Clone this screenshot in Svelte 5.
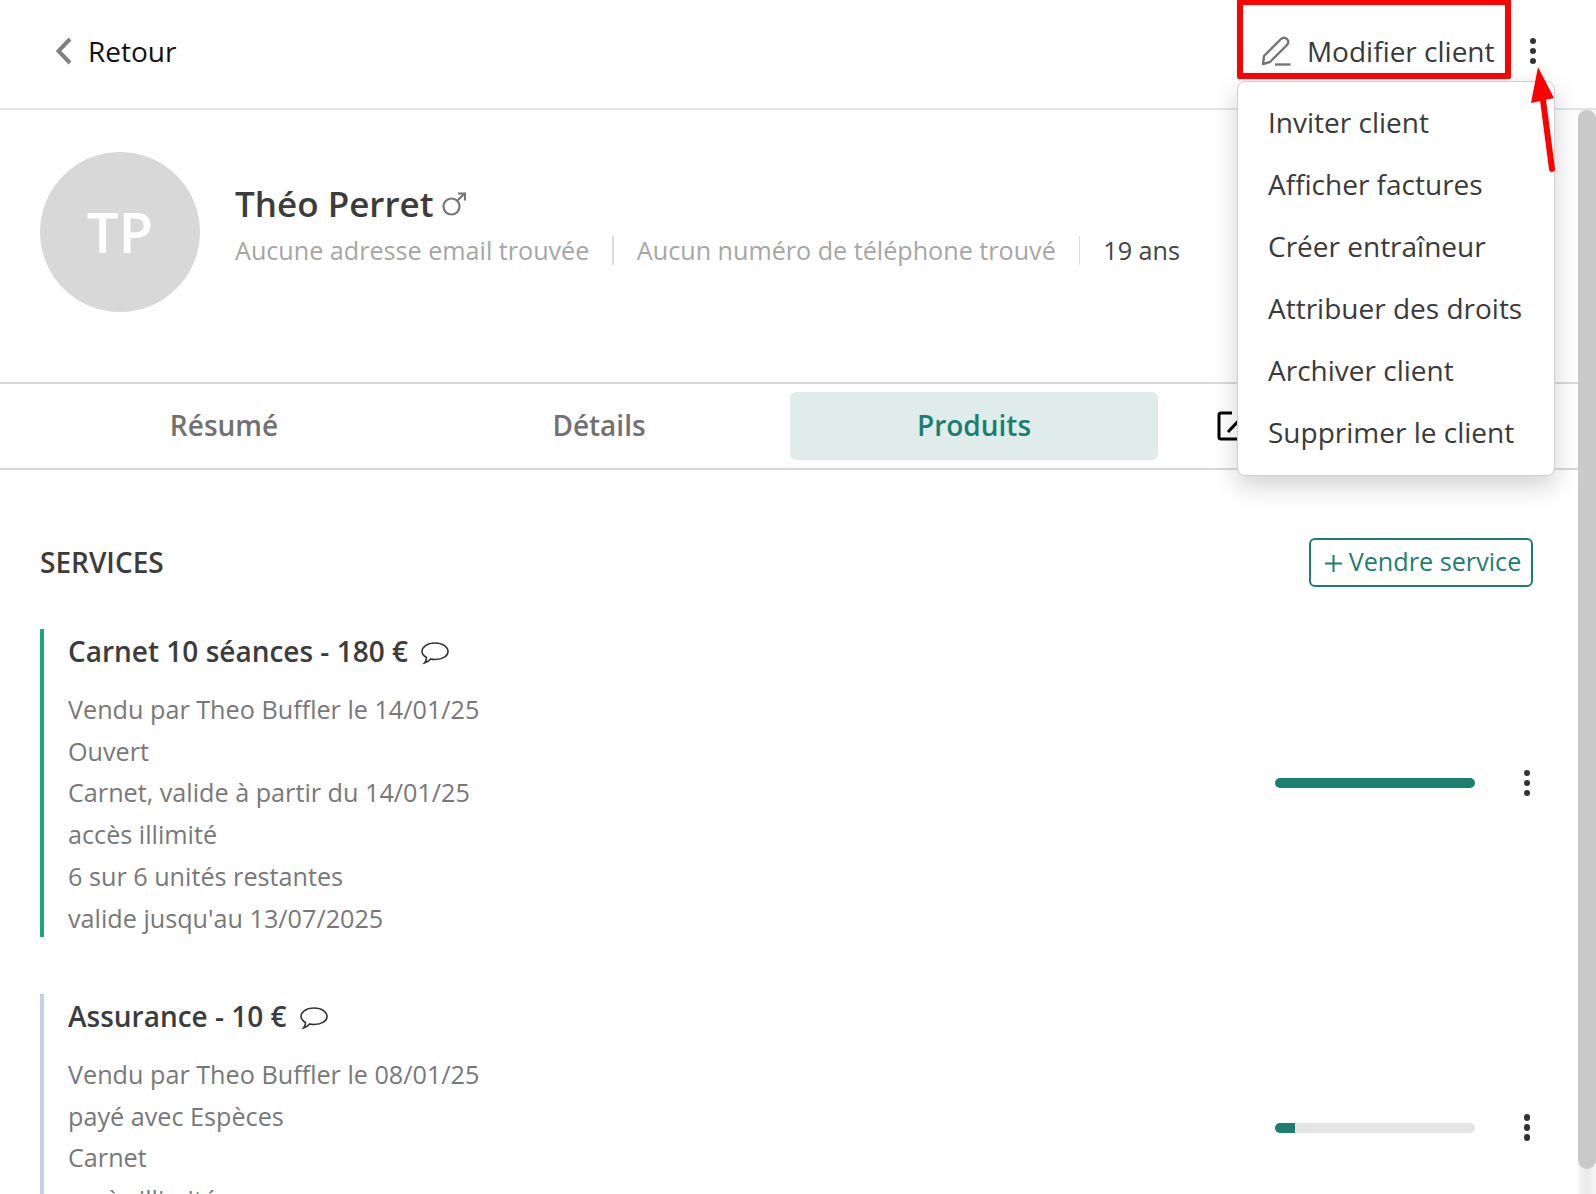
<script>
  const menuItems = [
    'Inviter client',
    'Afficher factures',
    'Créer entraîneur',
    'Attribuer des droits',
    'Archiver client',
    'Supprimer le client'
  ];

  const tabs = ['Résumé', 'Détails', 'Produits'];

  const services = [
    {
      title: 'Carnet 10 séances - 180 €',
      accent: 'green',
      progress: 100,
      lines: [
        'Vendu par Theo Buffler le 14/01/25',
        'Ouvert',
        'Carnet, valide à partir du 14/01/25',
        'accès illimité',
        '6 sur 6 unités restantes',
        'valide jusqu\'au 13/07/2025'
      ]
    },
    {
      title: 'Assurance - 10 €',
      accent: 'blue',
      progress: 10,
      lines: [
        'Vendu par Theo Buffler le 08/01/25',
        'payé avec Espèces',
        'Carnet',
        'accès illimité'
      ]
    }
  ];
</script>

<div class="page">
  <header class="topbar">
    <a class="back" href="#retour">
      <svg viewBox="0 0 18 28" width="18" height="28">
        <path d="M16 2 L4.5 14 L16 26" fill="none" stroke="#808080" stroke-width="4" />
      </svg>
      Retour
    </a>
    <div class="topbar__actions">
      <button class="edit">
        <svg viewBox="0 0 30 30" width="30" height="30" fill="none" stroke="#757575" stroke-width="2.4" stroke-linejoin="round">
          <path d="M2 28 L3 20 L20 3 Q23 0.5 26 3 Q28.5 6 26 9 L9 26 Z" />
          <path d="M14 28.5 H29.5" />
        </svg>
        Modifier client
      </button>
      <span class="dots"><i></i><i></i><i></i></span>
    </div>
  </header>

  <div class="body">
    <main class="content">
      <section class="profile">
        <div class="avatar">TP</div>
        <div class="profile__info">
          <h1 class="name">
            Théo Perret
            <svg viewBox="0 0 24 24" width="24" height="24" fill="none" stroke="#757575" stroke-width="2.2">
              <circle cx="9.5" cy="14.5" r="8" />
              <path d="M15.5 8.5 L23 1 M16 1.5 H23 V8.5" />
            </svg>
          </h1>
          <p class="meta">
            <span class="meta__empty">Aucune adresse email trouvée</span>
            <span class="meta__sep"></span>
            <span class="meta__empty">Aucun numéro de téléphone trouvé</span>
            <span class="meta__sep"></span>
            <span>19 ans</span>
          </p>
        </div>
      </section>

      <nav class="tabs">
        {#each tabs as tab}
          <div class="tab" class:tab--active={tab === 'Produits'}>{tab}</div>
        {/each}
        <div class="tab tab--icon">
          <svg viewBox="0 0 30 30" width="30" height="30" fill="none" stroke="#000" stroke-width="3" stroke-linejoin="round">
            <path d="M27 17 V26 Q27 28 25 28 H4 Q2 28 2 26 V4 Q2 2 4 2 H15" />
            <path d="M11 21 L26 5" />
          </svg>
        </div>
      </nav>

      <section class="services">
        <div class="services__head">
          <h2>SERVICES</h2>
          <button class="sell">
            <svg viewBox="0 0 17 17" width="17" height="17" stroke="#1a7f70" stroke-width="2">
              <path d="M0 8.5 H17 M8.5 0 V17" />
            </svg>
            Vendre service
          </button>
        </div>

        {#each services as service}
          <article class="service service--{service.accent}">
            <div class="service__text">
              <h3>
                {service.title}
                <svg viewBox="0 0 28 24" width="28" height="24" fill="none" stroke="#333" stroke-width="1.6">
                  <path d="M14 2 C22 2 27 6 27 10.5 C27 15 22 18.5 14 18.5 C12.5 18.5 11 18.3 9.5 18 C8 20 6 21.5 3.5 22 C5 20.5 5.5 18.5 5.5 16.5 C3 15 1 13 1 10.5 C1 6 6 2 14 2 Z" />
                </svg>
              </h3>
              {#each service.lines as line}
                <p>{line}</p>
              {/each}
            </div>
            <div class="service__side">
              <div class="bar"><div class="bar__fill" style="width: {service.progress}%"></div></div>
              <span class="dots"><i></i><i></i><i></i></span>
            </div>
          </article>
        {/each}
      </section>
    </main>

    <div class="scrollbar"><div class="scrollbar__thumb"></div></div>
  </div>

  <ul class="menu">
    {#each menuItems as item}
      <li>{item}</li>
    {/each}
  </ul>

  <!-- annotations added on the screenshot -->
  <div class="highlight"></div>
  <svg class="arrow" viewBox="0 0 40 120" width="40" height="120">
    <path d="M18 7 L34 38 L11 43 Z" fill="#ff0000" />
    <path d="M23 40 L32 109" stroke="#ff0000" stroke-width="6" stroke-linecap="round" />
  </svg>
</div>

<style>
  :global(body) {
    margin: 0;
    background: #fff;
    font-family: 'Open Sans', 'Noto Sans', sans-serif;
  }

  .page {
    position: relative;
    width: 1596px;
    height: 1194px;
    overflow: hidden;
    display: flex;
    flex-direction: column;
    color: #3a3a3a;
  }

  .topbar {
    height: 110px;
    box-sizing: border-box;
    flex: none;
    display: flex;
    align-items: center;
    justify-content: space-between;
    padding: 0 60px 6px 54px;
    border-bottom: 2px solid #e4e4e4;
  }

  .back {
    display: flex;
    align-items: center;
    gap: 16px;
    font-size: 28px;
    color: #111;
    text-decoration: none;
  }

  .topbar__actions {
    display: flex;
    align-items: center;
    gap: 35px;
  }

  .edit {
    display: flex;
    align-items: center;
    gap: 16px;
    padding: 0;
    border: 0;
    background: none;
    font: inherit;
    font-size: 28px;
    color: #3a3a3a;
  }

  .dots {
    display: flex;
    flex-direction: column;
    gap: 3.5px;
    width: 6.5px;
  }

  .dots i {
    width: 6.5px;
    height: 6.5px;
    border-radius: 50%;
    background: #333;
  }

  .body {
    flex: 1;
    min-height: 0;
    display: flex;
  }

  .content {
    flex: 1;
    min-width: 0;
  }

  .scrollbar {
    width: 18px;
    flex: none;
    background: linear-gradient(90deg, #f7f7f7, #e9e9e9 50%, #f7f7f7);
  }

  .scrollbar__thumb {
    height: 1059px;
    background: #c9c9c9;
    border-radius: 9px;
  }

  .profile {
    height: 272px;
    box-sizing: border-box;
    padding: 42px 40px 0;
    display: flex;
    gap: 35px;
  }

  .avatar {
    width: 160px;
    height: 160px;
    flex: none;
    border-radius: 50%;
    background: #d8d8d8;
    color: #fff;
    font-size: 56.5px;
    font-weight: 600;
    display: flex;
    align-items: center;
    justify-content: center;
    padding-bottom: 2px;
    box-sizing: border-box;
  }

  .profile__info {
    padding-top: 30px;
  }

  .name {
    margin: 0;
    display: flex;
    align-items: center;
    gap: 8px;
    font-size: 35px;
    line-height: 44px;
    font-weight: 600;
    color: #3c3c3c;
  }

  .meta {
    margin: 7px 0 0;
    display: flex;
    align-items: center;
    gap: 23px;
    font-size: 25.15px;
    line-height: 34px;
    color: #444;
  }

  .meta__empty {
    color: #a6a6a6;
  }

  .meta__sep {
    width: 1.5px;
    height: 29px;
    background: #dcdcdc;
  }

  .tabs {
    height: 88px;
    box-sizing: border-box;
    padding: 8px 44px 8px 40px;
    display: grid;
    grid-template-columns: repeat(4, 368px);
    gap: 7px;
    border-top: 2px solid #d9d9d9;
    border-bottom: 2px solid #d9d9d9;
  }

  .tab {
    display: flex;
    align-items: center;
    justify-content: center;
    border-radius: 6px;
    padding-bottom: 3px;
    font-size: 28px;
    font-weight: 600;
    color: #717171;
  }

  .tab--icon {
    justify-content: flex-start;
    padding: 0 0 0 52px;
  }

  .tab--active {
    background: #e0ecea;
    color: #1a7f70;
  }

  .services {
    padding: 68px 45px 0 40px;
  }

  .services__head {
    display: flex;
    align-items: center;
    justify-content: space-between;
    height: 49px;
    margin-bottom: 42px;
  }

  h2 {
    margin: 0;
    padding-bottom: 2px;
    font-size: 28px;
    font-weight: 600;
    color: #3c3c3c;
  }

  .sell {
    height: 49px;
    width: 224px;
    box-sizing: border-box;
    padding: 0 0 3px 4px;
    display: flex;
    align-items: center;
    justify-content: center;
    gap: 7px;
    border: 2px solid #1a7f70;
    border-radius: 6px;
    background: #fff;
    font: inherit;
    font-size: 25.2px;
    color: #1a7f70;
  }

  .sell svg {
    margin-top: 5px;
  }

  .service {
    height: 308px;
    flex: none;
    display: flex;
    align-items: center;
    justify-content: space-between;
    border-left: 4px solid;
    padding-left: 24px;
    margin-bottom: 57px;
  }

  .service--green {
    border-color: #1aa878;
  }

  /* one line shorter than the first card, its end is below the fold */
  .service--blue {
    height: 267px;
    border-color: #c5cfe5;
  }

  .service__text {
    align-self: flex-start;
  }

  h3 {
    margin: 0 0 16px;
    display: flex;
    align-items: center;
    gap: 13px;
    font-size: 28px;
    line-height: 44px;
    font-weight: 600;
    color: #3c3c3c;
  }

  h3 svg {
    margin-top: 4px;
  }

  .service__text p {
    margin: 0;
    font-size: 25.2px;
    line-height: 41.7px;
    color: #787878;
  }

  .service__side {
    display: flex;
    align-items: center;
    gap: 49px;
    padding-right: 3px;
  }

  .bar {
    width: 200px;
    height: 10px;
    border-radius: 5px;
    background: #e4e4e4;
    overflow: hidden;
  }

  .bar__fill {
    height: 100%;
    background: #1a7f70;
  }

  .menu {
    position: absolute;
    left: 1237px;
    top: 81px;
    width: 318px;
    height: 395px;
    box-sizing: border-box;
    margin: 0;
    padding: 9px 0 0 30px;
    list-style: none;
    background: #fff;
    border: 1px solid #cfcfcf;
    border-radius: 8px;
    box-shadow: 0 10px 26px rgba(0, 0, 0, 0.18);
  }

  .menu li {
    font-size: 28px;
    line-height: 62px;
    color: #3a3a3a;
  }

  .highlight {
    position: absolute;
    left: 1237px;
    top: -1px;
    width: 274px;
    height: 80px;
    box-sizing: border-box;
    border: 6px solid #ff0000;
    border-radius: 2px;
  }

  .arrow {
    position: absolute;
    left: 1520px;
    top: 60px;
  }
</style>
